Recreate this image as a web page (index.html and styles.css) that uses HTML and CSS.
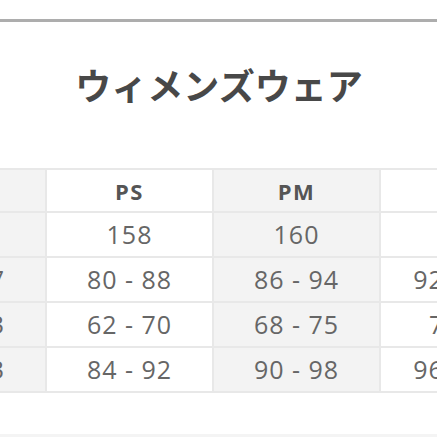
FILE: index.html
```html
<!DOCTYPE html>
<html lang="ja">
<head>
<meta charset="utf-8">
<link rel="stylesheet" href="styles.css">
</head>
<body>
<div class="page">
  <div class="rule"></div>
  <h1 class="title">ウィメンズウェア</h1>
  <div class="table-wrap">
    <table class="sizes">
      <colgroup>
        <col class="c"><col class="c"><col class="c"><col class="c">
      </colgroup>
      <tr class="head">
        <td class="shade">PXS</td>
        <td>PS</td>
        <td class="shade">PM</td>
        <td>PL</td>
      </tr>
      <tr>
        <td class="shade">155</td>
        <td>158</td>
        <td class="shade">160</td>
        <td>163</td>
      </tr>
      <tr>
        <td class="shade">74 - 77</td>
        <td>80 - 88</td>
        <td class="shade">86 - 94</td>
        <td>92 - 100</td>
      </tr>
      <tr>
        <td class="shade">56 - 63</td>
        <td>62 - 70</td>
        <td class="shade">68 - 75</td>
        <td class="narrow">74 - 81</td>
      </tr>
      <tr>
        <td class="shade">78 - 83</td>
        <td>84 - 92</td>
        <td class="shade">90 - 98</td>
        <td>96 - 104</td>
      </tr>
    </table>
  </div>
  <div class="bottom-rule"></div>
</div>
</body>
</html>
```

FILE: styles.css
```css
html, body {
  margin: 0;
  padding: 0;
  background: #ffffff;
}
.page {
  width: 437px;
  height: 437px;
  overflow: hidden;
  display: flex;
  flex-direction: column;
  padding-top: 19px;
  box-sizing: border-box;
}
.rule {
  height: 3px;
  background: #adadad;
}
.title {
  margin: 37px 0 0 0;
  height: 50px;
  line-height: 50px;
  text-align: center;
  font-family: "Noto Sans CJK JP", "Noto Sans", sans-serif;
  font-weight: 700;
  font-size: 36px;
  color: #484848;
  letter-spacing: 0;
  padding-left: 1px;
}
.table-wrap {
  margin-top: 59px;
  height: 228px;
  overflow: hidden;
}
.sizes {
  border-collapse: collapse;
  margin-left: -122px;
  width: 668px;
  table-layout: fixed;
  font-family: "Open Sans", "Noto Sans", sans-serif;
  color: #666666;
}
.sizes .c {
  width: 167px;
}
.sizes td {
  height: 43px;
  padding: 0;
  border: 2px solid #e8e8e8;
  text-align: center;
  vertical-align: middle;
  font-size: 25px;
  letter-spacing: 1px;
  line-height: 1;
  white-space: nowrap;
}
.sizes td.narrow {
  padding-left: 16px;
}
.sizes .head td {
  height: 41px;
  font-size: 22px;
  font-weight: 700;
  letter-spacing: 1.5px;
  color: #555555;
}
.sizes .shade {
  background: #f3f3f3;
}
.bottom-rule {
  margin-top: auto;
  height: 3px;
  background: #f4f4f4;
}
```
